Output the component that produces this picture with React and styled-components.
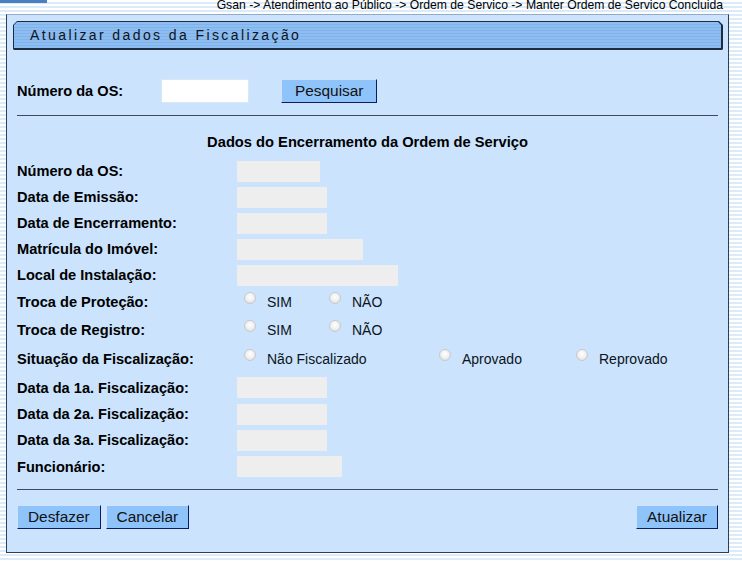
import React from "react";
import styled, { createGlobalStyle } from "styled-components";

const GlobalStyle = createGlobalStyle`
	html, body {
		margin: 0;
		padding: 0;
	}
	body {
		width: 742px;
		height: 561px;
		overflow: hidden;
		font-family: "Liberation Sans", Arial, sans-serif;
		color: #000;
		background: repeating-linear-gradient(to bottom, #ffffff 0px, #ffffff 2px, #dcebfa 2px, #dcebfa 4px);
	}
`;

//top strip
const TopStrip = styled.div`
	display: flex;
	align-items: flex-start;
	height: 11px;
	overflow: hidden;
`;

const TopTab = styled.div`
	width: 47px;
	height: 3px;
	background: #4b7fc0;
`;

const Breadcrumb = styled.div`
	flex: 1;
	display: flex;
	justify-content: flex-end;
	padding-right: 19px;
	font-size: 12.2px;
	line-height: 12px;
	margin-top: -2px;
	white-space: nowrap;
	span {
		border-top: 1px dotted #000;
		padding-top: 0;
	}
`;

const Highlight = styled.i`
	font-style: normal;
	box-shadow: inset 0 2px 0 #f5c400;
`;

//panel
const Panel = styled.div`
	margin: 3px 13px 0 6px;
	height: 539px;
	box-sizing: border-box;
	background: #cbe3fd;
	border: 1px solid #2d3f57;
	border-top-color: #93aac8;
	padding: 6px 5px 0 6px;
`;

const TitleOuter = styled.div`
	height: 29px;
	background: #1d2c40;
	clip-path: polygon(4px 0, calc(100% - 4px) 0, 100% 4px, 100% calc(100% - 1px), calc(100% - 1px) 100%, 1px 100%, 0 calc(100% - 1px), 0 4px);
	padding: 1px 2px 2px 1px;
	box-sizing: border-box;
`;

const TitleInner = styled.div`
	height: 100%;
	background: repeating-linear-gradient(to bottom, #8ebdf1 0px, #8ebdf1 2px, #80b2ec 2px, #80b2ec 3px);
	clip-path: polygon(3px 0, calc(100% - 3px) 0, 100% 3px, 100% 100%, 0 100%, 0 3px);
	font-size: 14px;
	letter-spacing: 2.4px;
	line-height: 26px;
	padding-left: 16px;
	color: #0c1420;
`;

const Body = styled.div`
	padding: 0 5px 0 4px;
`;

const SearchRow = styled.div`
	display: flex;
	align-items: center;
	height: 24px;
	margin-top: 29px;
`;

const Label = styled.div`
	font-weight: bold;
	font-size: 14.6px;
	width: ${(p) => p.w || 220}px;
	flex-shrink: 0;
	white-space: nowrap;
`;

const SearchInput = styled.input`
	width: 88px;
	height: 24px;
	box-sizing: border-box;
	border: 1px solid #d8e6f5;
	background: #fff;
	padding: 0 4px;
	margin: 0;
	outline: none;
`;

const Button = styled.button`
	font-family: "Liberation Sans", Arial, sans-serif;
	font-size: 15.4px;
	height: 24px;
	padding: 0 ${(p) => p.px || 10}px;
	margin: 0 0 0 ${(p) => p.ml || 0}px;
	background: #8fc4fb;
	color: #111;
	border: 1px solid;
	border-color: #cfe4fc #0d1a5e #0d1a5e #cfe4fc;
	border-radius: 0;
	line-height: 20px;
	cursor: pointer;
`;

const Rule = styled.hr`
	border: none;
	border-top: 1px solid #3c4c5e;
	margin: ${(p) => p.mt}px 0 0 0;
	height: 0;
`;

const Heading = styled.div`
	text-align: center;
	font-weight: bold;
	font-size: 14.7px;
	margin: 18px 0 8px;
	line-height: 16px;
	white-space: nowrap;
`;

const Row = styled.div`
	display: flex;
	align-items: center;
	height: ${(p) => p.h || 26}px;
`;

const Field = styled.div`
	width: ${(p) => p.w}px;
	height: 21px;
	background: #eeeeee;
`;

const Options = styled.div`
	display: flex;
	align-items: center;
	padding-left: 7px;
`;

const Option = styled.label`
	display: flex;
	align-items: center;
	width: ${(p) => p.w}px;
	font-size: 14px;
	color: #0c1420;
	white-space: nowrap;
`;

const Radio = styled.input.attrs({ type: "radio" })`
	appearance: none;
	width: 12px;
	height: 12px;
	margin: 0 11px 0 0;
	border-radius: 50%;
	border: 1px solid #c9c9c9;
	background: radial-gradient(circle at 50% 40%, #ffffff 0%, #f2f2f2 45%, #d6d6d6 100%);
	position: relative;
	top: -4px;
	box-sizing: border-box;
`;

const Footer = styled.div`
	display: flex;
	align-items: center;
	margin-top: 15px;
`;

const Spacer = styled.div`
	flex: 1;
`;

const rows = [
	{ label: "Número da OS:", w: 83 },
	{ label: "Data de Emissão:", w: 90 },
	{ label: "Data de Encerramento:", w: 90 },
	{ label: "Matrícula do Imóvel:", w: 126 },
	{ label: "Local de Instalação:", w: 161 },
];

const dates = [
	{ label: "Data da 1a. Fiscalização:", w: 90, h: 27 },
	{ label: "Data da 2a. Fiscalização:", w: 90, h: 26 },
	{ label: "Data da 3a. Fiscalização:", w: 90, h: 26 },
	{ label: "Funcionário:", w: 105, h: 27 },
];

const App = () => {
	return (
		<>
			<GlobalStyle />
			<TopStrip>
				<TopTab />
				<Breadcrumb>
					<span>
						Gsan -&gt; Atendimento ao Público -&gt; Ordem de Servico -&gt; <Highlight>Manter Ordem de Servico Concluida</Highlight>
					</span>
				</Breadcrumb>
			</TopStrip>
			<Panel>
				<TitleOuter>
					<TitleInner>Atualizar dados da Fiscalização</TitleInner>
				</TitleOuter>
				<Body>
					<SearchRow>
						<Label w={144}>Número da OS:</Label>
						<SearchInput />
						<Button ml={32} px={13}>Pesquisar</Button>
					</SearchRow>
					<Rule mt={12} />
					<Heading>Dados do Encerramento da Ordem de Serviço</Heading>
					{rows.map((r) => (
						<Row key={r.label}>
							<Label>{r.label}</Label>
							<Field w={r.w} />
						</Row>
					))}
					<Row h={28}>
						<Label>Troca de Proteção:</Label>
						<Options>
							<Option w={85}><Radio name="prot" />SIM</Option>
							<Option w={85}><Radio name="prot" />NÃO</Option>
						</Options>
					</Row>
					<Row h={28}>
						<Label>Troca de Registro:</Label>
						<Options>
							<Option w={85}><Radio name="reg" />SIM</Option>
							<Option w={85}><Radio name="reg" />NÃO</Option>
						</Options>
					</Row>
					<Row h={30}>
						<Label>Situação da Fiscalização:</Label>
						<Options>
							<Option w={195}><Radio name="sit" />Não Fiscalizado</Option>
							<Option w={137}><Radio name="sit" />Aprovado</Option>
							<Option w={120}><Radio name="sit" />Reprovado</Option>
						</Options>
					</Row>
					{dates.map((r) => (
						<Row key={r.label} h={r.h}>
							<Label>{r.label}</Label>
							<Field w={r.w} />
						</Row>
					))}
					<Rule mt={9} />
					<Footer>
						<Button>Desfazer</Button>
						<Button ml={5}>Cancelar</Button>
						<Spacer />
						<Button>Atualizar</Button>
					</Footer>
				</Body>
			</Panel>
		</>
	);
};

export default App;
